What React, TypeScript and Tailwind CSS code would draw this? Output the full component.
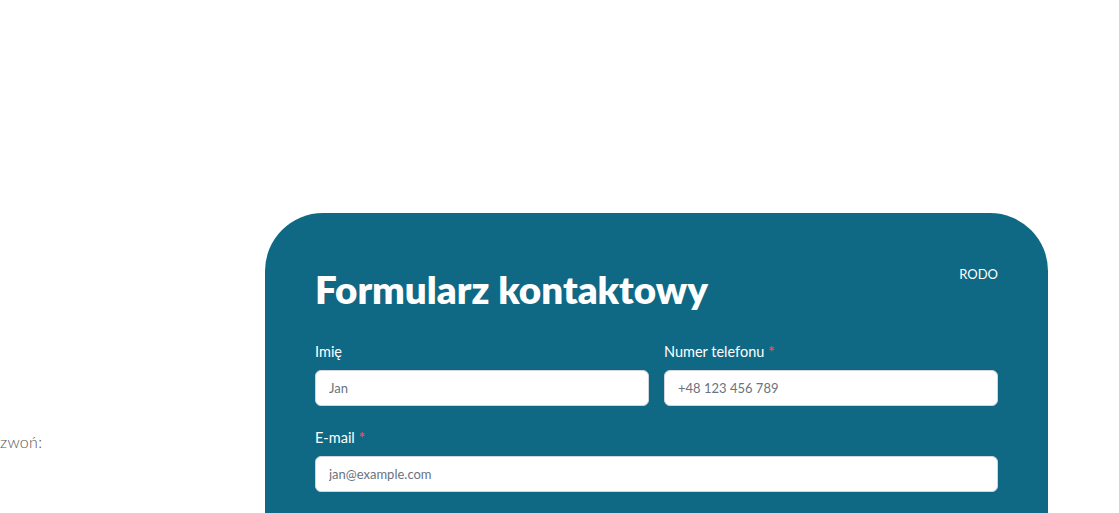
import React, { useState } from 'react';

type FieldProps = {
  label: string;
  required?: boolean;
  type?: string;
  placeholder: string;
  value: string;
  onChange: (v: string) => void;
};

function Field({ label, required, type = 'text', placeholder, value, onChange }: FieldProps) {
  return (
    <label className="flex flex-col">
      <span className="text-[14.5px] leading-[20px] text-white mb-[8px]">
        {label}
        {required && <span className="text-[#e8505b] ml-[4px] font-bold">*</span>}
      </span>
      <input
        type={type}
        value={value}
        onChange={e => onChange(e.target.value)}
        placeholder={placeholder}
        className="h-[36px] w-full rounded-[6px] bg-white border border-[#d1d5db] px-[13px] text-[13px] text-gray-800 placeholder:text-[#6b7280] outline-none"
      />
    </label>
  );
}

export default function App() {
  const [name, setName] = useState('');
  const [phone, setPhone] = useState('');
  const [email, setEmail] = useState('');

  return (
    <div className="h-[513px] bg-white overflow-hidden font-['Lato',sans-serif]">
      <div className="flex pt-[213px]">
        {/* contact column, mostly scrolled out of view */}
        <div className="w-[265px] shrink-0 pt-[219px]">
          <p className="text-[16px] leading-[20px] font-light text-[#555] tracking-[0.3px] whitespace-nowrap">zwoń:</p>
        </div>

        <section className="w-[783px] shrink-0 bg-[#0f6985] rounded-t-[58px] px-[50px] pt-[52px] pb-[60px]">
          <div className="flex items-start justify-between">
            <h2 className="text-[38.5px] leading-[48px] font-extrabold text-white">
              Formularz kontaktowy
            </h2>
            <a href="#" className="text-[13px] leading-[16px] text-white mt-[1px]">
              RODO
            </a>
          </div>

          <form className="mt-[29px] flex flex-col gap-[22px]" onSubmit={e => e.preventDefault()}>
            <div className="grid grid-cols-2 gap-[15px]">
              <Field label="Imię" placeholder="Jan" value={name} onChange={setName} />
              <Field
                label="Numer telefonu"
                required
                type="tel"
                placeholder="+48 123 456 789"
                value={phone}
                onChange={setPhone}
              />
            </div>
            <Field
              label="E-mail"
              required
              type="email"
              placeholder="jan@example.com"
              value={email}
              onChange={setEmail}
            />
          </form>
        </section>
      </div>
    </div>
  );
}
